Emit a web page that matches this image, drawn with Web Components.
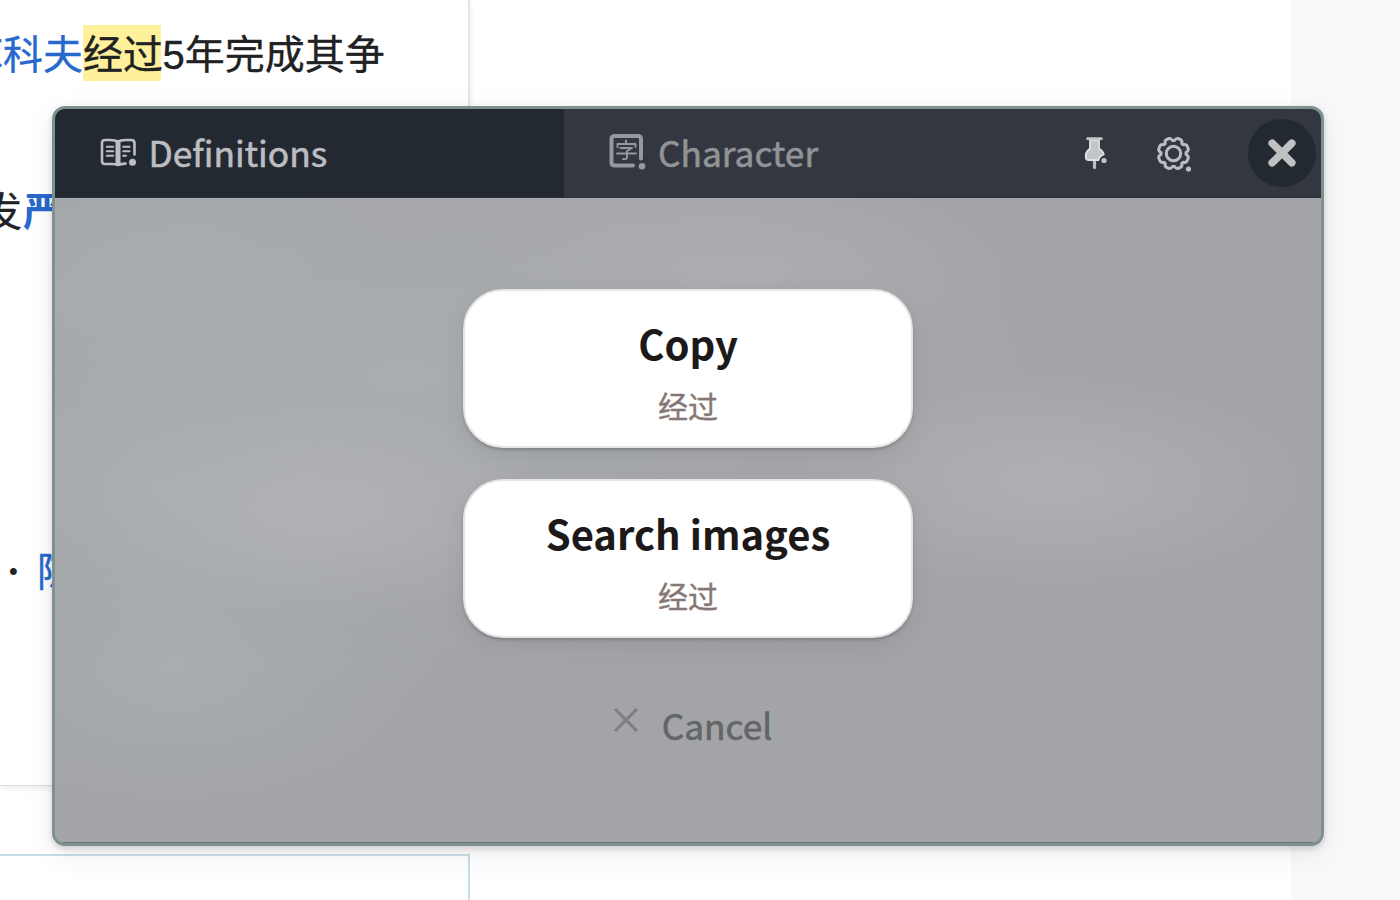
<!DOCTYPE html>
<html lang="zh">
<head>
<meta charset="utf-8">
<title>Dictionary popup</title>
<style>
html, body { margin: 0; height: 100%; overflow: hidden; background: #fff; }
body { font-family: "Noto Sans CJK SC", sans-serif; }
</style>
</head>
<body>
<article-page>
  <popup-window>
    <popup-header slot="header">
      <popup-tab active label="Definitions">
        <svg slot="icon" width="38" height="32" viewBox="0 0 38 32" fill="none" stroke="#bdbec1" stroke-width="2.600" stroke-linecap="round" stroke-linejoin="round">
          <path d="M18 5C16 3 13.500 3 10 3H5Q2 3 2 6V24Q2 27 5 27H12Q16 27 18 28Q20 27 25.500 26.600M18 5C20 3 23 3 26 3H31Q34.500 3 34.500 6V17.500"/>
          <path d="M18 4.500V28.500" stroke-width="5" stroke-linecap="butt"/>
          <path d="M6.800 9.800H13.200M6.800 14.200H13.200M6.800 18.800H13.200M23.200 9.800H29.500M23.200 14.200H29.500M23.200 18.800H26" stroke-width="2"/>
          <circle cx="32.500" cy="25.300" r="3.500" fill="#bdbec1" stroke="none"/>
        </svg>
      </popup-tab>
      <popup-tab label="Character">
        <svg slot="icon" width="40" height="38" viewBox="0 0 40 38" fill="none" stroke="#97989b" stroke-linecap="round" stroke-linejoin="round">
          <path d="M25 32.500H7Q3.500 32.500 3.500 29.500V6Q3.500 3 7 3H29.500Q33 3 33 6V25.500" stroke-width="4"/>
          <path d="M18 7.500V10M9.500 14V11H27.500V14M12.500 15H24L19 18V24.500Q19 26.500 15 26M9 20.500H28" stroke-width="1.900"/>
          <circle cx="34" cy="33.200" r="3.300" fill="#97989b" stroke="none"/>
        </svg>
      </popup-tab>
      <icon-button kind="pin">
        <svg width="28" height="36" viewBox="0 0 28 36">
          <path d="M11.500 23V31.500" stroke="#bcbdc1" stroke-width="3.200" stroke-linecap="round"/>
          <path d="M7 4V12.500Q3 15.500 2.800 19V22Q3 24 5.500 24H15.500Q16.500 20 20.800 18.500Q20 15 16 12.500V4Z" fill="#c3c4c8" stroke="#e0e1e3" stroke-width="1.800" stroke-linejoin="round"/>
          <path d="M4.600 2.700H18.400" stroke="#c3c4c8" stroke-width="2.800" stroke-linecap="round"/>
          <circle cx="21" cy="24.500" r="2.600" fill="#c3c4c8"/>
        </svg>
      </icon-button>
      <icon-button kind="gear">
        <svg width="38" height="38" viewBox="0 0 38 38" fill="none" stroke="#bcbdc1" stroke-width="3" stroke-linejoin="round">
          <path d="M14 2.500Q16 2 17.500 4.500H19.500Q21 2 23 2.500L26 3.800Q27.500 5 26.700 7.500L28 8.800Q31 8 32 9.700L33.300 13Q33.500 15 31 16.500V18.500Q33.700 20 33.300 22L32 25Q31 27 28 26.200L26.700 27.500Q27.500 30 26 31.200L23 32.500Q21 33 19.500 30.500H17.500Q16 33 14 32.500L11 31.200Q9.500 30 10.300 27.500L9 26.200Q6 27 5 25L3.700 22Q3.300 20 6 18.500V16.500Q3.300 15 3.700 13L5 9.700Q6 8 9 8.800L10.300 7.500Q9.500 5 11 3.800Z"/>
          <circle cx="18.500" cy="17.500" r="7.200"/>
          <circle cx="33.500" cy="33" r="2.600" fill="#bcbdc1" stroke="none"/>
        </svg>
      </icon-button>
      <icon-button kind="close">
        <svg width="32" height="32" viewBox="0 0 32 32"><path d="M6.200 6.200L25.800 25.800M25.800 6.200L6.200 25.800" stroke="#bfc1c2" stroke-width="7.600" stroke-linecap="round"/></svg>
      </icon-button>
    </popup-header>
    <action-card><span slot="title">Copy</span>经过</action-card>
    <action-card><span slot="title">Search images</span>经过</action-card>
    <cancel-button>Cancel</cancel-button>
  </popup-window>
</article-page>

<script>
const define = (name, markup) => customElements.define(name, class extends HTMLElement {
  constructor() {
    super();
    const template = document.createElement('template');
    template.innerHTML = markup;
    this.attachShadow({ mode: 'open' }).append(template.content.cloneNode(true));
    const label = this.shadowRoot.querySelector('[data-label]');
    if (label) label.textContent = this.getAttribute('label');
  }
});

define('article-page', `
<style>
:host { display: grid; grid-template-columns: 470px 1fr 109px; height: 900px; position: relative; overflow: hidden; }
.column { display: flex; flex-direction: column; gap: 68px; overflow: visible; min-width: 0; }
.card { box-sizing: border-box; height: 786px; border-right: 2px solid #e5e5e6; border-bottom: 1px solid #dedede; box-shadow: 0 2px 6px #00000014; padding-top: 25px; font: 40px/56px "Liberation Sans", "Noto Sans CJK SC", sans-serif; color: #202122; -webkit-text-stroke: .35px; }
.line { white-space: nowrap; }
.first { margin-left: -37px; height: 56px; line-height: 60px; }
.second { margin: 103px 0 0 -18px; }
.third { margin: 304px 0 0 9px; display: flex; }
.bullet { width: 28px; font-size: 25px; line-height: 55px; -webkit-text-stroke: 0; }
a { color: #2869cd; }
b { font-family: "Noto Sans CJK SC", sans-serif; font-weight: 700; line-height: 1; margin-left: 1px; -webkit-text-stroke: 0; }
mark { background: linear-gradient(#fff09b, #fff09b) 0 0 / 78px 56px no-repeat; color: inherit; display: inline-block; height: 56px; vertical-align: top; margin-right: -.500px; }
.next { flex: 1; border: 2px solid #c7dde9; border-left: 0; border-bottom: 0; }
.margin { background: #f8f9fb; }
.popup { position: absolute; left: 52px; top: 106px; }
</style>
<div class="column">
  <div class="card">
    <div class="line first"><a>库科夫</a><mark>经过</mark>5年完成其争</div>
    <div class="line second">发<a><b>严</b></a></div>
    <div class="line third"><span class="bullet">•</span><a>陈</a></div>
  </div>
  <div class="next"></div>
</div>
<div></div>
<div class="margin"></div>
<div class="popup"><slot></slot></div>`);

define('popup-window', `
<style>
:host { display: flex; flex-direction: column; box-sizing: border-box; width: 1272px; height: 740px; border: 3px solid #7e9191; border-radius: 13px; overflow: hidden; box-shadow: 0 3px 6px #00000026, 0 8px 30px #00000014;
  background: #a3a4a7; }
.body { flex: 1; display: flex; flex-direction: column; align-items: center; gap: 31px; padding-top: 92px;
  background:
    radial-gradient(ellipse 240px 110px at 275px 310px, #b1b2b5, #b1b2b500),
    radial-gradient(ellipse 270px 110px at 1000px 285px, #afb0b3, #afb0b300),
    radial-gradient(ellipse 270px 100px at 690px 75px, #adaeb1cc, #adaeb100),
    radial-gradient(ellipse 230px 130px at 110px 90px, #a7adae, #a7adae00),
    radial-gradient(ellipse 230px 150px at 105px 290px, #a9aeb0, #a9aeb000),
    radial-gradient(ellipse 270px 150px at 120px 470px, #a8adaf, #a8adaf00),
    radial-gradient(ellipse 720px 320px at 350px 180px, #a9acb0, #a9acb000),
    #a3a4a7; box-shadow: inset 0 1px #2d343d, inset 0 -1px #697474; }
</style>
<slot name="header"></slot>
<div class="body"><slot></slot></div>`);

define('popup-header', `
<style>:host { display: flex; height: 88px; background: #333740; flex: none; align-items: center; }</style>
<slot></slot>`);

define('popup-tab', `
<style>
:host { display: flex; align-items: center; box-sizing: border-box; width: 509px; height: 88px; padding: 0 0 0 45px; flex: none; color: #929396; font: 35.300px/52px "Noto Sans CJK SC", sans-serif; -webkit-text-stroke: .6px; }
:host([active]) { background: #232931; color: #bcbdc1; }
:host(:not([active])) { width: 500px; padding-left: 44px; }
.icon { display: flex; width: 48.500px; }
:host(:not([active])) .icon { width: 50px; margin-top: -2px; }
[data-label] { margin-top: -3px; }
</style>
<span class="icon"><slot name="icon"></slot></span><span data-label></span>`);

define('icon-button', `
<style>
:host { display: flex; align-items: center; justify-content: center; width: 68px; height: 68px; flex: none; }
:host([kind=pin]) { width: 64px; position: relative; left: 1px; top: 1px; }
:host([kind=gear]) { width: 38px; margin-left: 27px; position: relative; top: 2px; }
:host([kind=close]) { margin-left: 55px; border-radius: 50%; background: #232931; }
</style>
<slot></slot>`);

define('action-card', `
<style>
:host { display: flex; flex-direction: column; align-items: center; box-sizing: border-box; width: 450px; height: 159px; flex: none; border: 2px solid #e5e5e5; border-radius: 40px; background: #fff; box-shadow: 0 2px 3px #0000002e, 0 8px 24px #00000012; font: 30px/44px "Noto Sans CJK SC", sans-serif; color: #857874; padding-top: 20px; -webkit-text-stroke: .4px; }
.title { font-size: 40px; line-height: 64px; font-weight: 700; color: #1c1918; margin-bottom: 8px; -webkit-text-stroke: 0; }
</style>
<span class="title"><slot name="title"></slot></span><span><slot></slot></span>`);

define('cancel-button', `
<style>
:host { display: flex; align-items: center; margin: 30px 0 0 9px; gap: 23px; color: #646568; font: 35.300px/52px "Noto Sans CJK SC", sans-serif; -webkit-text-stroke: .6px; }
svg { margin-top: -10px; }
</style>
<svg width="26" height="26" viewBox="0 0 26 26"><path d="M2 2L24 24M24 2L2 24" stroke="#7d7e82" stroke-width="3"/></svg><span><slot></slot></span>`);
</script>
</body>
</html>
